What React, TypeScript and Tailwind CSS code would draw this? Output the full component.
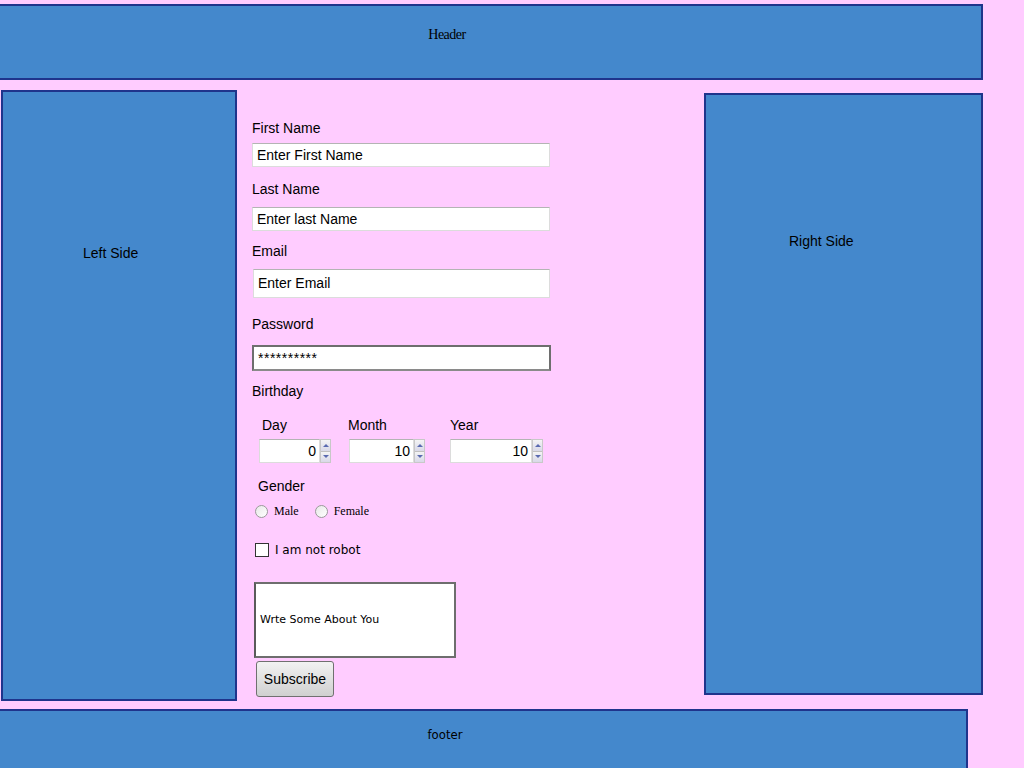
import React from "react";

const sans = { fontFamily: '"Liberation Sans", Arial, sans-serif' };

function Spinner() {
  return (
    <div className="flex flex-col w-[11px] h-[24px] border border-[#c8c8c8] bg-[#f0f0f0]">
      <div className="flex-1 flex items-center justify-center bg-gradient-to-b from-[#f4f4f4] to-[#d8d8e8] border-b border-[#c0c0c0]">
        <div className="w-0 h-0 border-l-[3px] border-r-[3px] border-b-[3px] border-l-transparent border-r-transparent border-b-[#5a6ab0]" />
      </div>
      <div className="flex-1 flex items-center justify-center bg-gradient-to-b from-[#f4f4f4] to-[#d8d8e8]">
        <div className="w-0 h-0 border-l-[3px] border-r-[3px] border-t-[3px] border-l-transparent border-r-transparent border-t-[#5a6ab0]" />
      </div>
    </div>
  );
}

function NumberBox({ value, width }: { value: string; width: string }) {
  return (
    <div className={`flex items-center ${width}`}>
      <div className="flex-1 h-[24px] bg-white border border-[#dcdcdc] border-t-[#b4b4b4] text-right pr-[3px] text-[14px] leading-[22px] text-black">
        {value}
      </div>
      <Spinner />
    </div>
  );
}

export default function App() {
  return (
    <div className="min-h-[768px] bg-[#ffccff] overflow-hidden text-black" style={sans}>
      <div
        className="mt-[4px] -ml-[89px] w-[1072px] h-[76px] bg-[#4488cc] border-2 border-[#1f348c] text-center pt-[18px] text-[14px] tracking-[-0.5px]"
        style={{ fontFamily: '"Liberation Serif", "Times New Roman", serif' }}
      >
        Header
      </div>

      <div className="flex items-start mt-[10px]">
        <div className="ml-[1px] w-[236px] h-[611px] bg-[#4488cc] border-2 border-[#1f348c] pl-[80px] pt-[151px] text-[14px]">
          Left Side
        </div>

        <div className="ml-[15px] w-[452px] pt-[30px] text-[14px] leading-[16px]">
          <div>First Name</div>
          <div className="mt-[7px] w-[298px] h-[24px] bg-white border border-[#dcdcdc] border-t-[#b4b4b4] pl-[4px] leading-[22px]">
            Enter First Name
          </div>

          <div className="mt-[14px]">Last Name</div>
          <div className="mt-[10px] w-[298px] h-[24px] bg-white border border-[#dcdcdc] border-t-[#b4b4b4] pl-[4px] leading-[22px]">
            Enter last Name
          </div>

          <div className="mt-[12px]">Email</div>
          <div className="mt-[10px] ml-[1px] w-[297px] h-[29px] bg-white border border-[#dcdcdc] border-t-[#b4b4b4] pl-[4px] leading-[27px]">
            Enter Email
          </div>

          <div className="mt-[18px]">Password</div>
          <div className="mt-[13px] w-[299px] h-[26px] bg-white border-2 border-[#6e6e6e] border-b-[#8a8a8a] pl-[4px] leading-[22px] tracking-[0.5px]">
            **********
          </div>

          <div className="mt-[12px]">Birthday</div>

          <div className="mt-[18px] flex">
            <div className="ml-[7px] w-[90px]">
              <div className="pl-[3px]">Day</div>
              <div className="mt-[6px]">
                <NumberBox value="0" width="w-[72px]" />
              </div>
            </div>
            <div className="w-[101px]">
              <div className="-ml-[1px]">Month</div>
              <div className="mt-[6px]">
                <NumberBox value="10" width="w-[76px]" />
              </div>
            </div>
            <div>
              <div>Year</div>
              <div className="mt-[6px]">
                <NumberBox value="10" width="w-[93px]" />
              </div>
            </div>
          </div>

          <div className="mt-[15px] ml-[6px]">Gender</div>

          <div
            className="mt-[9px] flex items-center text-[12px]"
            style={{ fontFamily: '"Liberation Serif", "Times New Roman", serif' }}
          >
            <span className="ml-[3px] w-[13px] h-[13px] rounded-full border border-[#9a9a9a] bg-gradient-to-br from-[#e8e8e8] to-white" />
            <span className="ml-[6px]">Male</span>
            <span className="ml-[16px] w-[13px] h-[13px] rounded-full border border-[#9a9a9a] bg-gradient-to-br from-[#e8e8e8] to-white" />
            <span className="ml-[6px]">Female</span>
          </div>

          <div
            className="mt-[23px] flex items-center text-[12px]"
            style={{ fontFamily: '"DejaVu Sans", sans-serif' }}
          >
            <span className="ml-[3px] w-[14px] h-[14px] border border-[#333] bg-white" />
            <span className="ml-[6px]">I am not robot</span>
          </div>

          <div
            className="mt-[24px] ml-[2px] w-[202px] h-[76px] bg-white border-2 border-[#6e6e6e] border-l-[#5a5a5a] pl-[4px] flex items-center text-[11px]"
            style={{ fontFamily: '"DejaVu Sans", sans-serif' }}
          >
            Wrte Some About You
          </div>

          <button className="mt-[3px] ml-[4px] w-[78px] h-[36px] rounded-[3px] border border-[#707070] bg-gradient-to-b from-[#f2f2f2] to-[#d0d0d0] text-[14px] text-black">
            Subscribe
          </button>
        </div>

        <div className="mt-[3px] w-[279px] h-[602px] bg-[#4488cc] border-2 border-[#1f348c] pl-[83px] pt-[136px] text-[14px]">
          Right Side
        </div>
      </div>

      <div
        className="mt-[8px] -ml-[78px] w-[1046px] h-[70px] bg-[#4488cc] border-2 border-b-0 border-[#1f348c] text-center pt-[14px] text-[13px]"
        style={{ fontFamily: '"DejaVu Sans Condensed", "Liberation Sans Narrow", sans-serif' }}
      >
        footer
      </div>
    </div>
  );
}
